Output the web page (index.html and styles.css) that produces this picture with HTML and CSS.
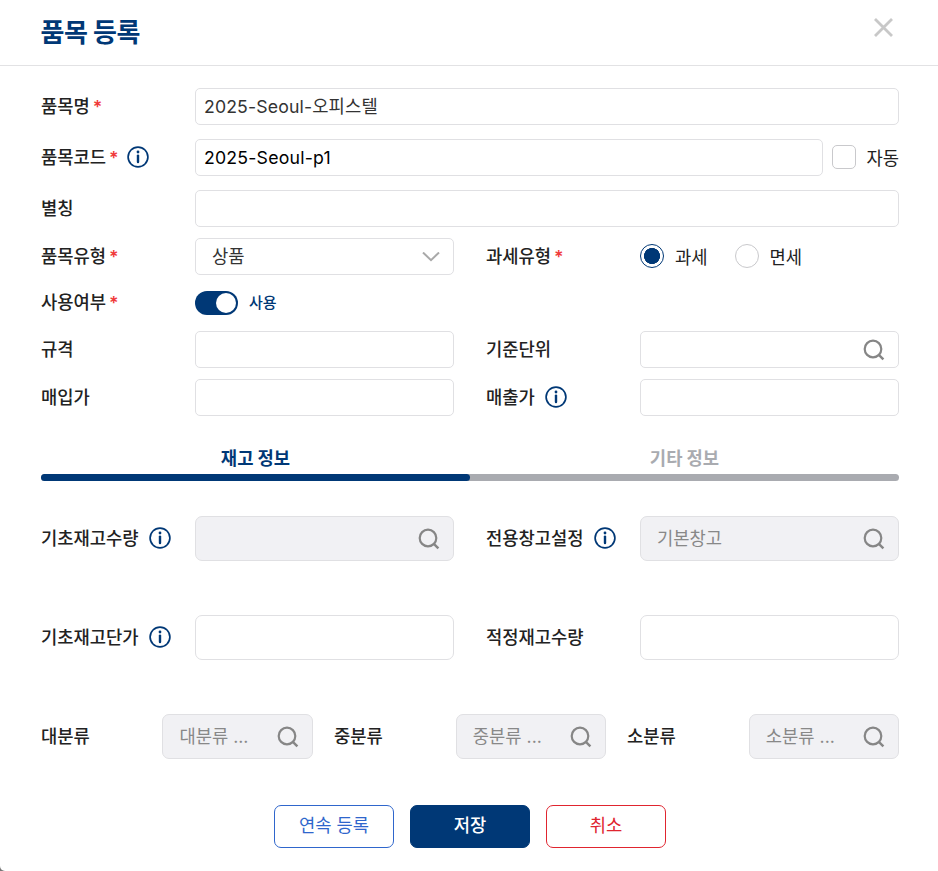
FILE: index.html
```html
<!DOCTYPE html>
<html lang="ko">
<head>
    <meta charset="UTF-8">
    <meta name="viewport" content="width=device-width, initial-scale=1.0">
    <title>품목 등록</title>
    <link rel="stylesheet" href="styles.css">
</head>
<body>
    <!-- 공통 아이콘 -->
    <svg class="icon-defs" width="0" height="0">
        <symbol id="icon-info" viewBox="0 0 22 22">
            <circle cx="11" cy="11" r="9.9" fill="none" stroke="currentColor" stroke-width="1.7"/>
            <circle cx="11" cy="6" r="1.4" fill="currentColor"/>
            <path d="M11 9.6v6.4" fill="none" stroke="currentColor" stroke-width="2.4" stroke-linecap="round"/>
        </symbol>
        <symbol id="icon-search" viewBox="0 0 22 22">
            <circle cx="10" cy="10" r="8.3" fill="none" stroke="currentColor" stroke-width="2.2"/>
            <path d="M15.8 15.8l4.6 4.6" fill="none" stroke="currentColor" stroke-width="2.4"/>
        </symbol>
    </svg>

    <div class="modal">
        <header class="modal-header">
            <h1>품목 등록</h1>
            <button type="button" class="close-btn" aria-label="닫기">
                <svg width="20" height="20" viewBox="0 0 20 20"><path d="M1 1l17 17M18 1l-17 17" fill="none" stroke="#c8c8c8" stroke-width="2.8"/></svg>
            </button>
        </header>

        <form class="modal-body">
            <div class="basic-info">
                <div class="row">
                    <label class="label" for="name">품목명<em>*</em></label>
                    <input type="text" class="input name" id="name" value="2025-Seoul-오피스텔">
                </div>
                <div class="row">
                    <label class="label" for="code">품목코드<em>*</em><svg class="info"><use href="#icon-info"/></svg></label>
                    <input type="text" class="input code" id="code" value="2025-Seoul-p1">
                    <label class="check"><input type="checkbox"><span>자동</span></label>
                </div>
                <div class="row">
                    <label class="label" for="alias">별칭</label>
                    <input type="text" class="input" id="alias">
                </div>
            </div>

            <div class="row-pair type-row">
                <div class="row">
                    <span class="label">품목유형<em>*</em></span>
                    <div class="field select">
                        <span>상품</span>
                        <svg width="18" height="10" viewBox="0 0 18 10"><path d="M1 .5l8 7.6L17 .5" fill="none" stroke="#a9a9a9" stroke-width="2"/></svg>
                    </div>
                </div>
                <div class="row">
                    <span class="label">과세유형<em>*</em></span>
                    <label class="radio"><input type="radio" name="tax" checked><span>과세</span></label>
                    <label class="radio"><input type="radio" name="tax"><span>면세</span></label>
                </div>
            </div>

            <div class="row use-row">
                <span class="label">사용여부<em>*</em></span>
                <span class="toggle"></span>
                <span class="toggle-text">사용</span>
            </div>

            <div class="row-pair spec-row">
                <div class="row">
                    <label class="label" for="spec">규격</label>
                    <input type="text" class="input" id="spec">
                </div>
                <div class="row">
                    <span class="label">기준단위</span>
                    <div class="field">
                        <span></span>
                        <svg class="search"><use href="#icon-search"/></svg>
                    </div>
                </div>
            </div>

            <div class="row-pair price-row">
                <div class="row">
                    <label class="label" for="buy">매입가</label>
                    <input type="text" class="input" id="buy">
                </div>
                <div class="row">
                    <label class="label" for="sell">매출가<svg class="info"><use href="#icon-info"/></svg></label>
                    <input type="text" class="input" id="sell">
                </div>
            </div>

            <nav class="tabs">
                <a class="tab active">재고 정보</a>
                <a class="tab">기타 정보</a>
            </nav>
            <div class="tab-bar"><div class="tab-bar-fill"></div></div>

            <div class="stock-info">
                <div class="row-pair">
                    <div class="row">
                        <span class="label">기초재고수량<svg class="info"><use href="#icon-info"/></svg></span>
                        <div class="field disabled">
                            <span></span>
                            <svg class="search"><use href="#icon-search"/></svg>
                        </div>
                    </div>
                    <div class="row">
                        <span class="label">전용창고설정<svg class="info"><use href="#icon-info"/></svg></span>
                        <div class="field disabled">
                            <span>기본창고</span>
                            <svg class="search"><use href="#icon-search"/></svg>
                        </div>
                    </div>
                </div>

                <div class="row-pair">
                    <div class="row">
                        <label class="label" for="cost">기초재고단가<svg class="info"><use href="#icon-info"/></svg></label>
                        <input type="text" class="input" id="cost">
                    </div>
                    <div class="row">
                        <label class="label" for="qty">적정재고수량</label>
                        <input type="text" class="input" id="qty">
                    </div>
                </div>

                <div class="row-triple">
                    <div class="row">
                        <span class="label">대분류</span>
                        <div class="field disabled">
                            <span>대분류 ...</span>
                            <svg class="search"><use href="#icon-search"/></svg>
                        </div>
                    </div>
                    <div class="row">
                        <span class="label">중분류</span>
                        <div class="field disabled">
                            <span>중분류 ...</span>
                            <svg class="search"><use href="#icon-search"/></svg>
                        </div>
                    </div>
                    <div class="row">
                        <span class="label">소분류</span>
                        <div class="field disabled">
                            <span>소분류 ...</span>
                            <svg class="search"><use href="#icon-search"/></svg>
                        </div>
                    </div>
                </div>
            </div>

            <div class="buttons">
                <button type="button" class="btn btn-continue">연속 등록</button>
                <button type="button" class="btn btn-save">저장</button>
                <button type="button" class="btn btn-cancel">취소</button>
            </div>
        </form>
    </div>
</body>
</html>
```

FILE: styles.css
```css
* {
    box-sizing: border-box;
}
body {
    margin: 0;
    background-color: #777;
    font-family: Inter, "Noto Sans CJK KR", sans-serif;
    font-size: 17.7px;
    line-height: 24px;
    color: #222;
}
input, button {
    font: inherit;
    margin: 0;
}
h1 {
    margin: 0;
    font-size: 26px;
    font-weight: 700;
    line-height: 32px;
    letter-spacing: -0.5px;
    color: #003876;
}
.icon-defs {
    display: block;
}
.modal {
    height: 871px;
    background-color: #fff;
    border-bottom-left-radius: 5px;
}
.modal-header {
    display: flex;
    justify-content: space-between;
    align-items: center;
    height: 66px;
    padding: 0 44px 0 40.5px;
    border-bottom: 1px solid #e2e2e4;
}
.close-btn {
    display: flex;
    padding: 0;
    margin-bottom: 9px;
    border: none;
    background: none;
    cursor: pointer;
}
.modal-body {
    padding: 22px 39px 0 41px;
}
.basic-info {
    display: grid;
    gap: 14px;
}
.row {
    display: flex;
    align-items: center;
    min-width: 0;
}
.row-pair {
    display: grid;
    grid-template-columns: 1fr 1fr;
    gap: 32px;
}
.row-triple {
    display: grid;
    grid-template-columns: repeat(3, 1fr);
    gap: 21px;
}
.label {
    display: flex;
    align-items: center;
    flex: 0 0 154px;
    font-weight: 500;
    white-space: nowrap;
}
.row-triple .label {
    flex-basis: 121.4px;
}
.row-triple .row + .row .label {
    flex-basis: 121.8px;
}
.label em {
    margin-left: 3px;
    font-style: normal;
    font-weight: 600;
    color: #f03a3a;
}
.info {
    width: 22px;
    height: 22px;
    margin: 0 0 2px 10px;
    color: #003876;
}
.label em + .info {
    margin-left: 8px;
}
.input, .field {
    flex: 1;
    min-width: 0;
    height: 37px;
    border: 1px solid #e0e0e3;
    border-radius: 5px;
    background-color: #fff;
}
.input {
    padding: 0 8px;
    color: #333;
    letter-spacing: 0.13px;
    outline: none;
}
.input.name {
    padding-bottom: 3px;
}
.input.code {
    color: #000;
    letter-spacing: 0.2px;
}
.field {
    display: flex;
    align-items: center;
    justify-content: space-between;
    padding: 0 13px 0 16px;
    white-space: nowrap;
}
.select {
    color: #333;
}
.search {
    flex: none;
    width: 22px;
    height: 22px;
    color: #868686;
}
.disabled {
    background-color: #f1f1f4;
    color: #888;
}
.check, .radio {
    display: flex;
    align-items: center;
    gap: 11px;
    margin-bottom: 1px;
}
.check span, .radio span {
    padding-top: 2px;
    margin-bottom: -2px;
}
.check {
    gap: 10px;
    margin-left: 9px;
}
.check input, .radio input {
    appearance: none;
    width: 24px;
    height: 24px;
    border: 1px solid #c9c9cc;
    border-radius: 5px;
    background-color: #fff;
}
.radio + .radio {
    margin-left: 27px;
}
.radio input {
    border-radius: 50%;
}
.radio input:checked {
    border-color: #003876;
    background: radial-gradient(circle, #003876 7.8px, #fff 8.3px);
}
.type-row {
    margin-top: 11px;
}
.use-row {
    height: 24px;
    margin-top: 16px;
}
.toggle {
    display: flex;
    justify-content: flex-end;
    width: 43px;
    padding: 2px;
    border-radius: 12px;
    background-color: #003876;
}
.toggle::after {
    content: "";
    width: 20px;
    height: 20px;
    border-radius: 50%;
    background-color: #fff;
}
.toggle-text {
    margin-left: 11px;
    font-size: 15px;
    font-weight: 500;
    color: #003876;
}
.spec-row {
    margin-top: 16px;
}
.price-row {
    margin-top: 11px;
}
.tabs {
    display: flex;
    height: 32px;
    margin-top: 26px;
}
.tab {
    flex: 1;
    line-height: 34px;
    text-align: center;
    font-weight: 700;
    color: #a9abb0;
}
.tab.active {
    color: #003876;
}
.tab-bar {
    height: 7px;
    border-radius: 4px;
    background-color: #a9abb0;
}
.tab-bar-fill {
    width: 50%;
    height: 7px;
    border-radius: 4px;
    background-color: #003876;
}
.stock-info {
    display: grid;
    gap: 54px;
    margin-top: 35px;
}
.stock-info .input, .stock-info .field {
    height: 45px;
    border-radius: 7px;
}
.buttons {
    display: flex;
    justify-content: center;
    gap: 16px;
    margin-top: 46px;
}
.btn {
    width: 120px;
    height: 43px;
    padding: 0 0 2px;
    border: 1px solid;
    border-radius: 7px;
    background-color: #fff;
    cursor: pointer;
}
.btn-continue {
    color: #2f66cc;
}
.btn-save {
    border-color: #003876;
    background-color: #003876;
    color: #fff;
    font-weight: 500;
}
.btn-cancel {
    color: #e0252f;
}
```
